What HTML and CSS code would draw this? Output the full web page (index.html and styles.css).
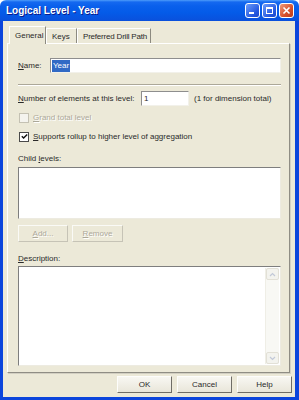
FILE: index.html
```html
<!DOCTYPE html>
<html lang="en">

<head>
    <meta charset="UTF-8">
    <meta name="viewport" content="width=device-width, initial-scale=1.0">
    <title>Logical Level - Year</title>
    <link rel="stylesheet" href="styles.css">
</head>

<body>
    <div class="window">
        <div class="titlebar">
            <span class="title">Logical Level - Year</span>
            <div class="caption-buttons">
                <span class="cap"><svg width="9" height="9" viewBox="0 0 9 9"><rect x="1" y="6" width="5" height="2" fill="#fff"/></svg></span>
                <span class="cap"><svg width="9" height="9" viewBox="0 0 9 9"><rect x="1.5" y="1.5" width="6" height="6" fill="none" stroke="#fff"/><rect x="1" y="1" width="7" height="2" fill="#fff"/></svg></span>
                <span class="cap close"><svg width="9" height="9" viewBox="0 0 9 9"><path d="M1.5 1.5 L7.5 7.5 M7.5 1.5 L1.5 7.5" stroke="#fff" stroke-width="1.6"/></svg></span>
            </div>
        </div>
        <div class="frame">
            <div class="tabs">
                <div class="tab active tab-general">General</div>
                <div class="tab tab-keys">Keys</div>
                <div class="tab tab-drill">Preferred Drill Path</div>
            </div>
            <div class="panel">
                <div class="field-row">
                    <span class="name-label"><u>N</u>ame:</span>
                    <div class="textbox"><span class="selected">Year</span></div>
                </div>
                <div class="sep"></div>
                <div class="field-row number-row">
                    <span class="number-label"><u>N</u>umber of elements at this level:</span>
                    <div class="textbox small">1</div>
                    <span class="hint">(1 for dimension total)</span>
                </div>
                <div class="check-row disabled grand">
                    <span class="box"></span>
                    <span><u>G</u>rand total level</span>
                </div>
                <div class="check-row supports">
                    <span class="box"><svg width="7" height="7" viewBox="0 0 7 7"><path d="M0.8 3.3 L2.6 5.1 L6.2 1.4" fill="none" stroke="#111" stroke-width="1.4"/></svg></span>
                    <span><u>S</u>upports rollup to higher level of aggregation</span>
                </div>
                <div class="group-label">Child <u>l</u>evels:</div>
                <div class="listbox"></div>
                <div class="list-buttons">
                    <span class="btn disabled add"><u>A</u>dd...</span>
                    <span class="btn disabled remove"><u>R</u>emove</span>
                </div>
                <div class="group-label desc"><u>D</u>escription:</div>
                <div class="textarea">
                    <div class="vscroll">
                        <span class="arrow"><svg width="7" height="5" viewBox="0 0 7 5"><path d="M1 4 L3.5 1.5 L6 4" fill="none" stroke="#C2C9D8" stroke-width="1.2"/></svg></span>
                        <span class="arrow"><svg width="7" height="5" viewBox="0 0 7 5"><path d="M1 1 L3.5 3.5 L6 1" fill="none" stroke="#C2C9D8" stroke-width="1.2"/></svg></span>
                    </div>
                </div>
            </div>
            <div class="footer">
                <span class="btn wide">OK</span>
                <span class="btn wide">Cancel</span>
                <span class="btn wide">Help</span>
            </div>
        </div>
    </div>
</body>

</html>
```

FILE: styles.css
```css
html,
body {
    margin: 0;
    padding: 0;
    background: #ffffff;
}

.window {
    width: 299px;
    height: 400px;
    display: flex;
    flex-direction: column;
    font-family: "Liberation Sans", Arial, sans-serif;
    font-size: 8px;
    color: #2a2a2a;
}

u {
    text-decoration: underline;
    text-underline-offset: 1px;
}

/* title bar */
.titlebar {
    height: 21px;
    flex: none;
    display: flex;
    align-items: center;
    padding: 0 5px 0 6px;
    border-radius: 6px 6px 0 0;
    background: linear-gradient(to bottom, #4E9CFA 0, #1569F0 2px, #0A60EC 6px, #045BE8 60%, #0A50DC 100%);
}

.title {
    flex: 1;
    color: #fff;
    font-weight: bold;
    font-size: 10px;
    text-shadow: 1px 1px #0B1C8C;
}

.caption-buttons {
    display: flex;
    gap: 2px;
}

.cap {
    width: 15px;
    height: 15px;
    box-sizing: border-box;
    border: 1px solid #fff;
    border-radius: 3px;
    display: flex;
    align-items: center;
    justify-content: center;
    background: linear-gradient(135deg, #6C9CF9, #2458E0 70%, #1C47C8);
}

.cap.close {
    background: linear-gradient(135deg, #EE9A7C, #D6502C 60%, #B83C1C);
}

/* dialog body */
.frame {
    flex: 1;
    display: flex;
    flex-direction: column;
    background: #ECE9D8;
    border: solid #0B45DC;
    border-width: 0 4px 3px 3px;
}

.tabs {
    display: flex;
    align-items: flex-end;
    height: 18px;
    margin: 5px 0 -1px 6px;
    position: relative;
    z-index: 1;
}

.tab {
    height: 15px;
    margin-bottom: 1px;
    padding: 0 0 0 5px;
    display: flex;
    align-items: center;
    box-sizing: border-box;
    white-space: nowrap;
    background: #ECE9D8;
    border-top: 1px solid #fff;
    border-left: 1px solid #fff;
    border-right: 1px solid #8C8A80;
}

.tab.active {
    height: 18px;
    margin-bottom: 0;
}

.tab-general {
    width: 37px;
}

.tab-keys {
    width: 31px;
}

.tab-drill {
    width: 74px;
    letter-spacing: -0.2px;
}

.panel {
    margin: 0 5px 0 4px;
    padding: 14px 8px 6px 10px;
    border-top: 1px solid #fff;
    border-left: 1px solid #fff;
    border-right: 1px solid #8F8D84;
    border-bottom: 1px solid #8F8D84;
    box-shadow: 1px 1px 0 #D2CFC2;
}

.field-row {
    display: flex;
    align-items: center;
}

.name-label {
    width: 32px;
}

.textbox {
    flex: 1;
    height: 15px;
    box-sizing: border-box;
    padding: 0 1px;
    display: flex;
    align-items: center;
    background: #fff;
    border: 1px solid;
    border-color: #8E8E8E #F2F1EA #F2F1EA #8E8E8E;
}

.textbox.small {
    flex: none;
    width: 48px;
    padding-left: 2px;
}

.selected {
    background: #316AC5;
    color: #fff;
    padding: 0 1px;
    line-height: 12px;
}

.sep {
    margin-top: 11px;
    border-top: 1px solid #ACA899;
    border-bottom: 1px solid #fff;
}

.number-row {
    margin-top: 5px;
}

.number-label {
    width: 123px;
}

.hint {
    margin-left: 5px;
}

.check-row {
    display: flex;
    align-items: center;
    height: 13px;
}

.grand {
    margin-top: 5px;
}

.supports {
    margin-top: 6px;
}

.box {
    width: 10px;
    height: 10px;
    box-sizing: border-box;
    margin: 0 4px 0 1px;
    display: flex;
    align-items: center;
    justify-content: center;
    background: #fff;
    border: 1px solid #4A4A4A;
}

.disabled {
    color: #ACA899;
    text-shadow: 1px 1px #fff;
}

.disabled .box {
    border-color: #C4C1B3;
    background: #F4F3EE;
}

.group-label {
    margin-top: 10px;
    line-height: 12px;
}

.group-label.desc {
    margin-top: 11px;
}

.listbox {
    margin-top: 2px;
    height: 52px;
    box-sizing: border-box;
    background: #fff;
    border: 1px solid;
    border-color: #7E7E7E #EDEBE1 #EDEBE1 #7E7E7E;
}

.list-buttons {
    margin-top: 6px;
    display: flex;
    gap: 4px;
}

.btn {
    height: 17px;
    box-sizing: border-box;
    display: flex;
    align-items: center;
    justify-content: center;
    background: linear-gradient(#F8F7F2, #E9E6DA);
    border: 1px solid;
    border-color: #FDFDFB #6F6D66 #6F6D66 #FDFDFB;
}

.btn.disabled {
    border-color: #FAFAF6 #C6C3B6 #C6C3B6 #FAFAF6;
    background: #ECE9D8;
}

.add {
    width: 50px;
}

.remove {
    width: 51px;
}

.textarea {
    margin-top: 1px;
    height: 100px;
    box-sizing: border-box;
    padding: 1px;
    display: flex;
    justify-content: flex-end;
    background: #fff;
    border: 1px solid;
    border-color: #7E7E7E #EDEBE1 #EDEBE1 #7E7E7E;
}

.vscroll {
    width: 13px;
    display: flex;
    flex-direction: column;
    justify-content: space-between;
    background: #F8F8F4;
    border-left: 1px solid #EFEEE6;
}

.arrow {
    height: 12px;
    box-sizing: border-box;
    display: flex;
    align-items: center;
    justify-content: center;
    border: 1px solid #E2E0D6;
    border-radius: 2px;
    background: #F3F3EE;
}

.footer {
    display: flex;
    justify-content: flex-end;
    gap: 5px;
    padding: 3px 3px 0 0;
}

.btn.wide {
    width: 55px;
}
```
